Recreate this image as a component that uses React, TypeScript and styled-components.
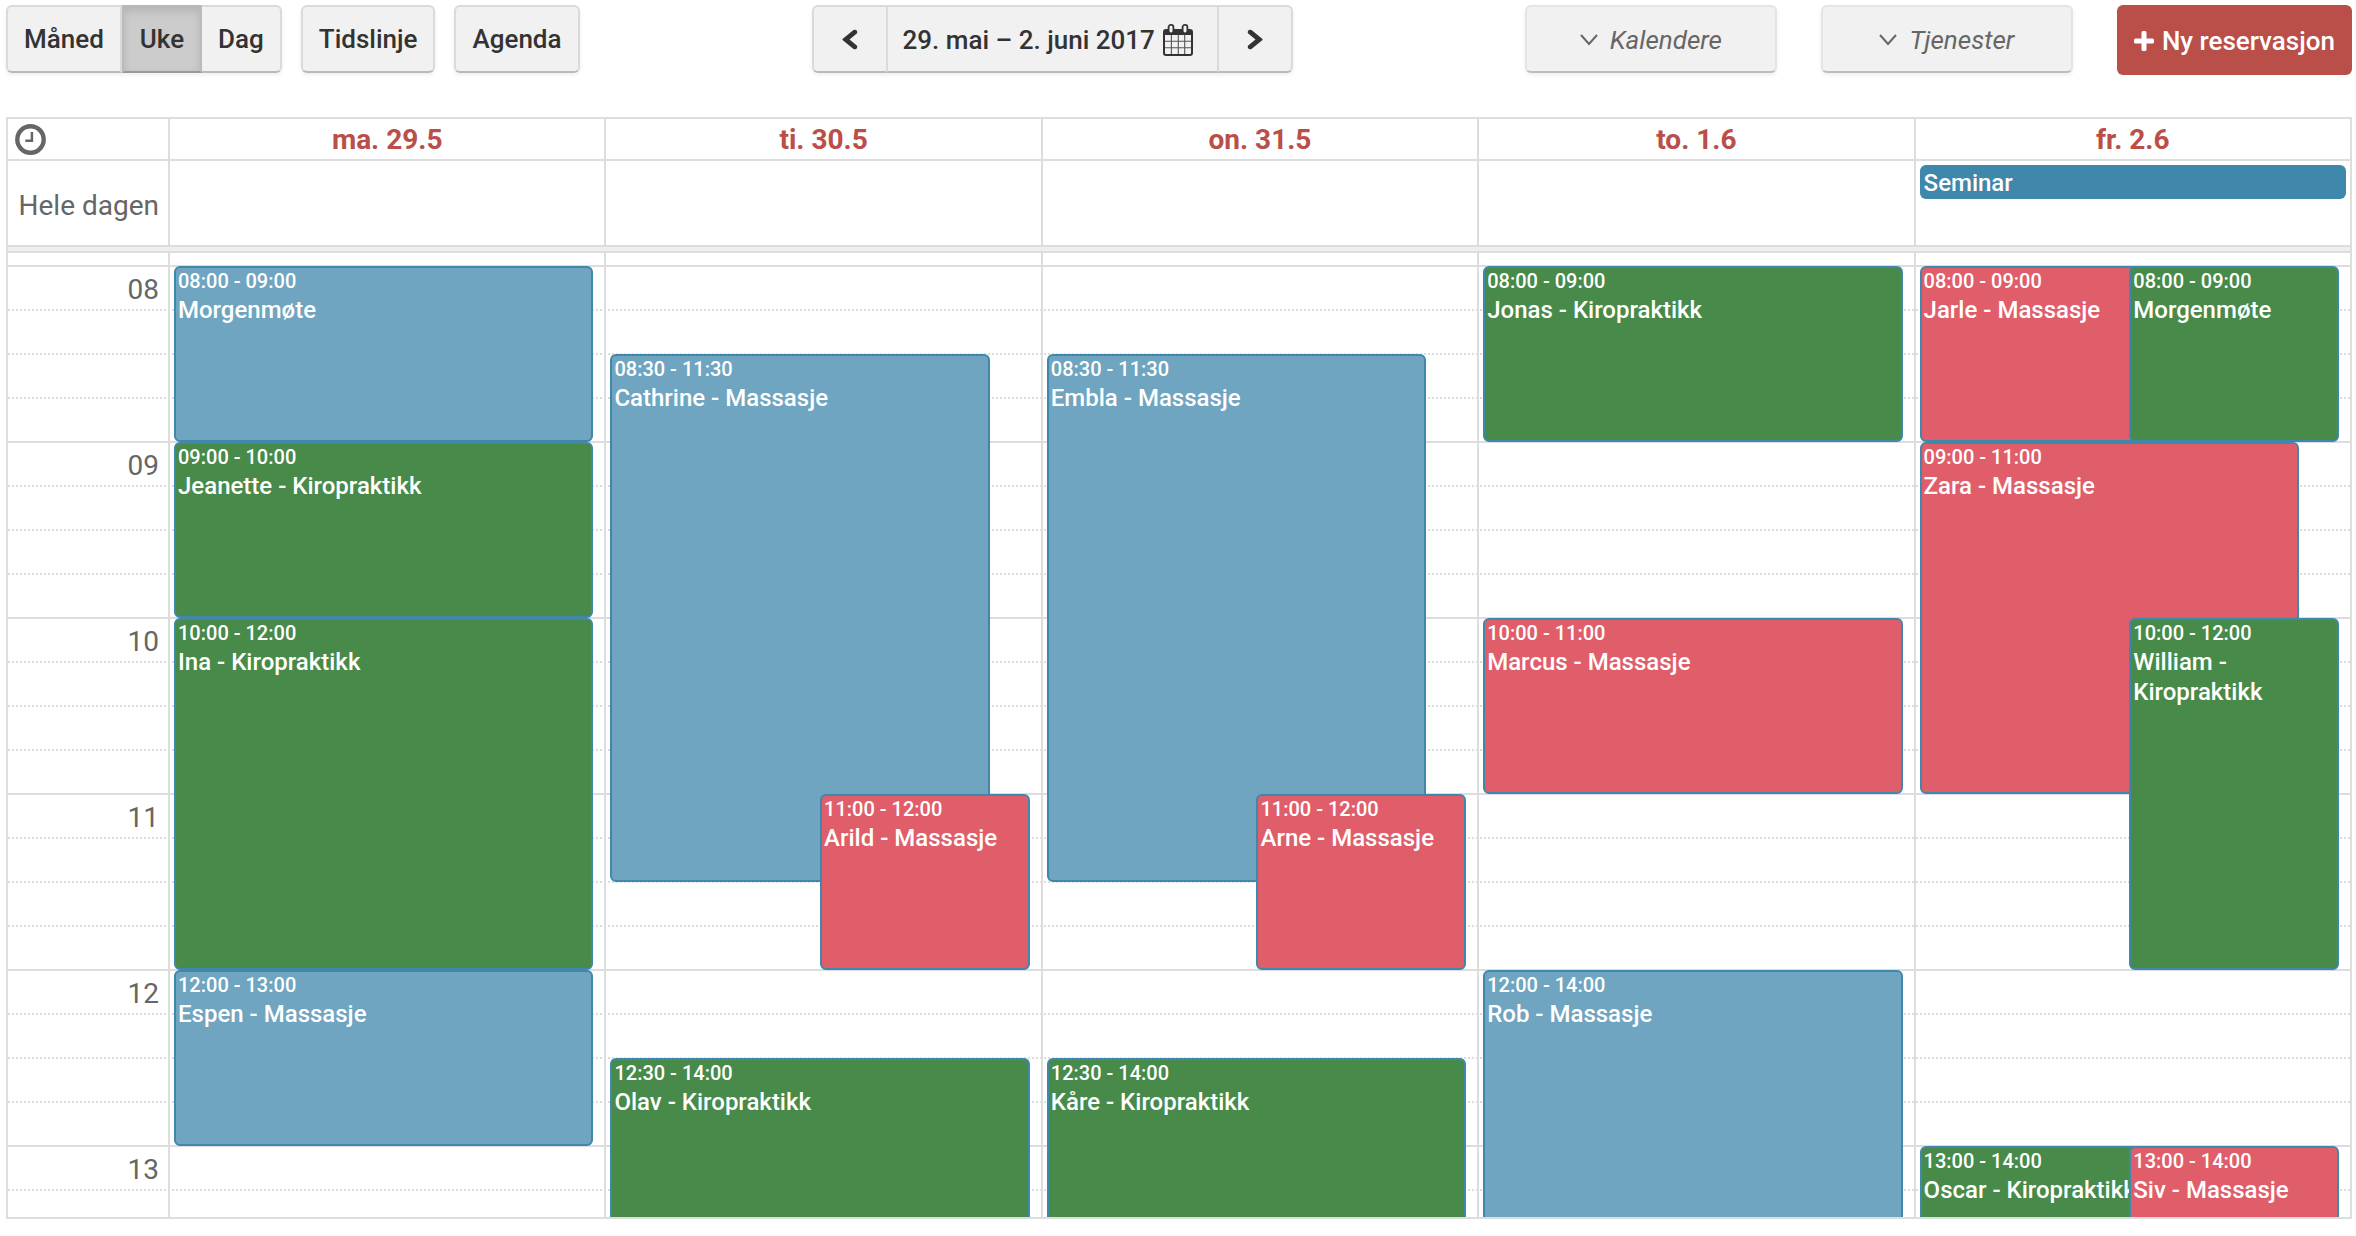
import React from 'react';
import styled, { createGlobalStyle, css } from 'styled-components';

const LINE = '#dddddd';
const ACCENT = '#3f87ab';
const RED = '#ba4e48';
const SLOT = 44;
const FIRST_HOUR = 8;

const GlobalStyle = createGlobalStyle`
  *, *::before, *::after { box-sizing: border-box; }
  body {
    margin: 0;
    background: #fff;
    color: #333;
    font-family: Roboto, "Liberation Sans", sans-serif;
  }
  button { font-family: inherit; cursor: pointer; }
`;

const Page = styled.main`
  display: flex;
  flex-direction: column;
  height: 100vh;
  padding: 5px 4px 17px 6px;
`;

const Toolbar = styled.header`
  display: flex;
  justify-content: space-between;
  align-items: flex-start;
  height: 112px;
  flex: none;
`;

const Side = styled.div<{ $end?: boolean }>`
  display: flex;
  gap: ${p => (p.$end ? 44 : 19)}px;
`;

const Group = styled.div`
  display: flex;
  border-radius: 6px;
  box-shadow: 0 2px 4px rgba(0, 0, 0, 0.07);
`;

const buttonFace = css`
  display: flex;
  align-items: center;
  justify-content: center;
  height: 68px;
  background: #f1f1f1;
  border: 2px solid #dadada;
  border-bottom-color: #b8bab8;
  color: #333;
  font-size: 26px;
  font-weight: 500;
  line-height: 32px;
`;

const GroupButton = styled.button<{ $active?: boolean }>`
  ${buttonFace}
  padding: 0 16px;
  &:first-child { border-radius: 6px 0 0 6px; }
  &:last-child { border-radius: 0 6px 6px 0; }
  &:only-child { border-radius: 6px; }
  & + & { border-left-width: 0; }
  &:has(+ &) { border-right-width: 0; }
  ${p =>
    p.$active &&
    css`
      && {
        background: #cccccc;
        border-width: 2px;
        border-color: #b8b8b8 #bbbbbb #999999;
        box-shadow: inset 0 4px 8px rgba(0, 0, 0, 0.12);
      }
    `}
`;

const ArrowButton = styled.button`
  ${buttonFace}
  padding: 0 28px;
  &:first-child { border-radius: 6px 0 0 6px; border-right-width: 0; }
  &:last-child { border-radius: 0 6px 6px 0; border-left-width: 0; }
`;

const DateButton = styled.button`
  ${buttonFace}
  gap: 8px;
  padding: 2px 24px 0 15px;
`;

const FilterButton = styled.button`
  ${buttonFace}
  width: 252px;
  gap: 12px;
  padding-top: 2px;
  border-radius: 6px;
  border-color: #e4e4e4;
  border-bottom-color: #bcbebc;
  box-shadow: 0 2px 4px rgba(0, 0, 0, 0.07);
  color: #666;
  font-style: italic;
  font-weight: 400;
`;

const NewButton = styled.button`
  display: flex;
  align-items: center;
  gap: 8px;
  height: 70px;
  padding: 2px 17px 0;
  border: 0;
  border-radius: 6px;
  background: ${RED};
  color: #fff;
  font-size: 26px;
  font-weight: 500;
  line-height: 32px;
`;

const Calendar = styled.section`
  display: flex;
  flex-direction: column;
  flex: 1;
  min-height: 0;
  border: 2px solid ${LINE};
`;

const Row = styled.div`
  display: grid;
  grid-template-columns: 160px repeat(5, minmax(0, 1fr));
  flex: none;
`;

const HeadRow = styled(Row)`
  height: 42px;
  border-bottom: 2px solid ${LINE};
`;

const AllDayRow = styled(Row)`
  height: 84px;
`;

const Divider = styled.div`
  flex: none;
  height: 8px;
  background: #eeeeee;
  border: solid ${LINE};
  border-width: 2px 0;
`;

const AxisCell = styled.div`
  display: flex;
  align-items: center;
  padding: 0 7px;
`;

const AllDayLabel = styled(AxisCell)`
  justify-content: flex-end;
  padding: 5px 9px 0 0;
  color: #666;
  font-size: 28px;
  line-height: 40px;
`;

const DayHead = styled.h2`
  margin: 0;
  border-left: 2px solid ${LINE};
  color: ${RED};
  font-size: 28px;
  font-weight: 700;
  line-height: 41px;
  text-align: center;
`;

const AllDayCell = styled.div`
  padding: 4px;
  border-left: 2px solid ${LINE};
`;

const AllDayEvent = styled.div`
  height: 34px;
  padding: 2px 4px;
  border-radius: 6px;
  background: ${ACCENT};
  color: #fff;
  font-size: 24px;
  font-weight: 500;
  line-height: 32px;
`;

const TimeGrid = styled.div`
  display: grid;
  flex: 1;
  min-height: 0;
  overflow: hidden;
`;

const Slots = styled.div`
  grid-area: 1 / 1;
  padding-top: 12px;
`;

const Slot = styled.div<{ $minor: boolean }>`
  height: ${SLOT}px;
  border-top: 2px ${p => (p.$minor ? 'dotted' : 'solid')} ${LINE};
`;

const HourLabel = styled.div`
  width: 160px;
  padding-right: 9px;
  color: #666;
  font-size: 28px;
  line-height: 46px;
  text-align: right;
`;

const Columns = styled(Row)`
  grid-area: 1 / 1;
`;

const DayColumn = styled.div`
  padding: 13px 11px 0 4px;
  border-left: 2px solid ${LINE};
`;

const Lane = styled.div`
  position: relative;
  height: 100%;
`;

const tones = { blue: '#6fa5c0', green: '#478a4a', red: '#e05e6a' };
type Tone = keyof typeof tones;
type Fit = 'full' | 'under' | 'right';

const fits: Record<Fit, string> = {
  full: 'left: 0; right: 0;',
  under: 'left: 0; right: 40px;',
  right: 'left: 50%; right: 0;',
};

const Event = styled.article<{ $start: number; $end: number; $tone: Tone; $fit: Fit }>`
  position: absolute;
  top: ${p => (p.$start - FIRST_HOUR) * SLOT * 4}px;
  height: ${p => (p.$end - p.$start) * SLOT * 4}px;
  ${p => fits[p.$fit]}
  padding: 0 2px;
  overflow: hidden;
  border: 2px solid ${ACCENT};
  border-radius: 6px;
  background: ${p => tones[p.$tone]};
  color: #fff;
  font-weight: 500;
`;

const EventTime = styled.div`
  font-size: 20px;
  line-height: 27px;
  white-space: nowrap;
`;

const EventTitle = styled.div`
  font-size: 24px;
  line-height: 30px;
`;

interface Booking {
  start: number;
  end: number;
  title: string;
  tone: Tone;
  fit?: Fit;
}

const days: { label: string; allDay?: string; bookings: Booking[] }[] = [
  {
    label: 'ma. 29.5',
    bookings: [
      { start: 8, end: 9, title: 'Morgenmøte', tone: 'blue' },
      { start: 9, end: 10, title: 'Jeanette - Kiropraktikk', tone: 'green' },
      { start: 10, end: 12, title: 'Ina - Kiropraktikk', tone: 'green' },
      { start: 12, end: 13, title: 'Espen - Massasje', tone: 'blue' },
    ],
  },
  {
    label: 'ti. 30.5',
    bookings: [
      { start: 8.5, end: 11.5, title: 'Cathrine - Massasje', tone: 'blue', fit: 'under' },
      { start: 11, end: 12, title: 'Arild - Massasje', tone: 'red', fit: 'right' },
      { start: 12.5, end: 14, title: 'Olav - Kiropraktikk', tone: 'green' },
    ],
  },
  {
    label: 'on. 31.5',
    bookings: [
      { start: 8.5, end: 11.5, title: 'Embla - Massasje', tone: 'blue', fit: 'under' },
      { start: 11, end: 12, title: 'Arne - Massasje', tone: 'red', fit: 'right' },
      { start: 12.5, end: 14, title: 'Kåre - Kiropraktikk', tone: 'green' },
    ],
  },
  {
    label: 'to. 1.6',
    bookings: [
      { start: 8, end: 9, title: 'Jonas - Kiropraktikk', tone: 'green' },
      { start: 10, end: 11, title: 'Marcus - Massasje', tone: 'red' },
      { start: 12, end: 14, title: 'Rob - Massasje', tone: 'blue' },
    ],
  },
  {
    label: 'fr. 2.6',
    allDay: 'Seminar',
    bookings: [
      { start: 8, end: 9, title: 'Jarle - Massasje', tone: 'red', fit: 'under' },
      { start: 8, end: 9, title: 'Morgenmøte', tone: 'green', fit: 'right' },
      { start: 9, end: 11, title: 'Zara - Massasje', tone: 'red', fit: 'under' },
      { start: 10, end: 12, title: 'William - Kiropraktikk', tone: 'green', fit: 'right' },
      { start: 13, end: 14, title: 'Oscar - Kiropraktikk', tone: 'green', fit: 'under' },
      { start: 13, end: 14, title: 'Siv - Massasje', tone: 'red', fit: 'right' },
    ],
  },
];

const hours = [8, 9, 10, 11, 12, 13];
const pad = (n: number) => String(n).padStart(2, '0');
const clock = (t: number) => `${pad(Math.floor(t))}:${pad((t % 1) * 60)}`;

const PrevIcon = () => (
  <svg width="16" height="21" viewBox="0 0 16 21" fill="#333" aria-hidden="true">
    <path d="M15 2Q14 0 11.500 1L0.500 10V11L11.500 20Q14 21 15 19Q15.700 17.300 14.800 16.500L7.500 10.500L14.800 4.500Q15.700 3.500 15 2Z" />
  </svg>
);

const NextIcon = () => (
  <svg width="16" height="21" viewBox="0 0 16 21" fill="#333" aria-hidden="true">
    <path d="M1 2Q2 0 4.500 1L15.500 10V11L4.500 20Q2 21 1 19Q0.300 17.300 1.200 16.500L8.500 10.500L1.200 4.500Q0.300 3.500 1 2Z" />
  </svg>
);

const DownArrow = () => (
  <svg width="18" height="12" viewBox="0 0 18 12" fill="none" stroke="#666" strokeWidth="2" aria-hidden="true">
    <path d="M1 1 L9 10 L17 1" />
  </svg>
);

const CalendarIcon = () => (
  <svg width="30" height="32" viewBox="0 0 30 32" aria-hidden="true">
    <rect x="1" y="6" width="28" height="25" rx="2" fill="#f1f1f1" stroke="#333" strokeWidth="2" />
    <path d="M1 6H29V11H1Z" fill="#333" />
    <path d="M8.400 11V30M15.300 11V30M21.700 11V30M2 17.300H28M2 23.700H28" stroke="#555" strokeWidth="1.100" />
    <rect x="5.600" y="0.900" width="4.800" height="8.400" rx="2.200" fill="#f1f1f1" stroke="#333" strokeWidth="1.800" />
    <rect x="19.600" y="0.900" width="4.800" height="8.400" rx="2.200" fill="#f1f1f1" stroke="#333" strokeWidth="1.800" />
  </svg>
);

const PlusIcon = () => (
  <svg width="20" height="20" viewBox="0 0 20 20" fill="#fff" aria-hidden="true">
    <path d="M9 0H11Q12.500 0 12.500 1.500V7.500H18.500Q20 7.500 20 9V11Q20 12.500 18.500 12.500H12.500V18.500Q12.500 20 11 20H9Q7.500 20 7.500 18.500V12.500H1.500Q0 12.500 0 11V9Q0 7.500 1.500 7.500H7.500V1.500Q7.500 0 9 0Z" />
  </svg>
);

const ClockIcon = () => (
  <svg width="31" height="31" viewBox="0 0 31 31" fill="none" stroke="#666" aria-hidden="true">
    <circle cx="15.500" cy="15.500" r="13.200" strokeWidth="4.400" />
    <path d="M16.900 8V16.800H10.300" strokeWidth="2.500" />
  </svg>
);

export default function App() {
  return (
    <Page>
      <GlobalStyle />
      <Toolbar>
        <Side>
          <Group>
            <GroupButton>Måned</GroupButton>
            <GroupButton $active aria-pressed="true">Uke</GroupButton>
            <GroupButton>Dag</GroupButton>
          </Group>
          <Group><GroupButton>Tidslinje</GroupButton></Group>
          <Group><GroupButton>Agenda</GroupButton></Group>
        </Side>
        <Group>
          <ArrowButton aria-label="Forrige uke"><PrevIcon /></ArrowButton>
          <DateButton>29. mai – 2. juni 2017 <CalendarIcon /></DateButton>
          <ArrowButton aria-label="Neste uke"><NextIcon /></ArrowButton>
        </Group>
        <Side $end>
          <FilterButton aria-haspopup="listbox"><DownArrow />Kalendere</FilterButton>
          <FilterButton aria-haspopup="listbox"><DownArrow />Tjenester</FilterButton>
          <NewButton><PlusIcon />Ny reservasjon</NewButton>
        </Side>
      </Toolbar>
      <Calendar>
        <HeadRow>
          <AxisCell><ClockIcon /></AxisCell>
          {days.map(d => <DayHead key={d.label}>{d.label}</DayHead>)}
        </HeadRow>
        <AllDayRow>
          <AllDayLabel>Hele dagen</AllDayLabel>
          {days.map(d => (
            <AllDayCell key={d.label}>{d.allDay && <AllDayEvent>{d.allDay}</AllDayEvent>}</AllDayCell>
          ))}
        </AllDayRow>
        <Divider />
        <TimeGrid>
          <Slots>
            {hours.map(h =>
              [0, 1, 2, 3].map(q => (
                <Slot key={`${h}-${q}`} $minor={q > 0}>
                  {q === 0 && <HourLabel>{pad(h)}</HourLabel>}
                </Slot>
              )),
            )}
          </Slots>
          <Columns>
            <div />
            {days.map(d => (
              <DayColumn key={d.label}>
                <Lane>
                  {d.bookings.map(b => (
                    <Event
                      key={b.title + b.start}
                      $start={b.start}
                      $end={b.end}
                      $tone={b.tone}
                      $fit={b.fit ?? 'full'}
                    >
                      <EventTime>{clock(b.start)} - {clock(b.end)}</EventTime>
                      <EventTitle>{b.title}</EventTitle>
                    </Event>
                  ))}
                </Lane>
              </DayColumn>
            ))}
          </Columns>
        </TimeGrid>
      </Calendar>
    </Page>
  );
}
